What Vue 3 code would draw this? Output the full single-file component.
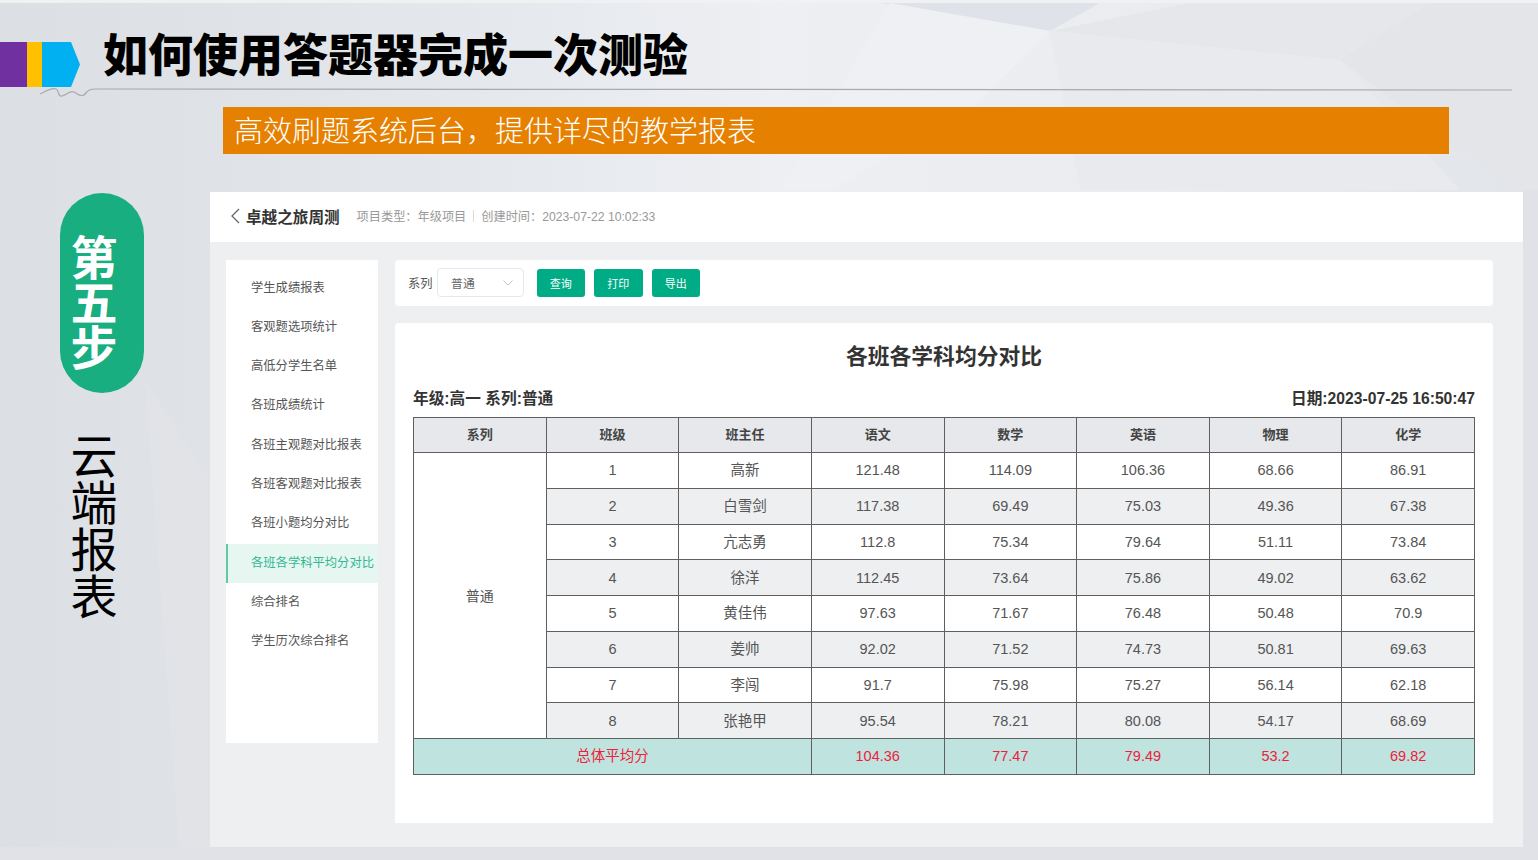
<template>
  <div class="slide">
    <svg class="bg" viewBox="0 0 1538 860" preserveAspectRatio="none" aria-hidden="true">
      <defs>
        <linearGradient id="base" x1="0" y1="0" x2="1" y2="0">
          <stop offset="0" stop-color="#dcdfe3" />
          <stop offset="0.14" stop-color="#dfe2e6" />
          <stop offset="0.32" stop-color="#e5e8ec" />
          <stop offset="0.5" stop-color="#edeff3" />
          <stop offset="0.68" stop-color="#ebedf1" />
          <stop offset="0.85" stop-color="#e8eaee" />
          <stop offset="1" stop-color="#e1e4e8" />
        </linearGradient>
      </defs>
      <rect width="1538" height="860" fill="url(#base)" />
      <polygon points="0,0 1538,0 1538,3 0,3" fill="#f0f1f3" />
      <polygon points="880,3 1100,3 1050,31" fill="#dfe2e8" />
      <polygon points="1050,31 1190,3 1430,3 1340,60" fill="#e5e7eb" />
      <polygon points="890,3 1050,31 970,110 830,190 780,190" fill="#eff0f4" />
      <polygon points="1050,31 1340,60 1460,190 1080,190" fill="#e8eaee" />
      <polygon points="1430,3 1538,3 1538,190 1510,190 1340,60" fill="#e3e5e9" />
      <polygon points="145,380 210,480 210,860 180,860" fill="#e1e3e7" />
      <polygon points="0,847 1538,847 1538,860 0,860" fill="#e0e2e7" />
      <polygon points="1523,190 1538,190 1538,860 1523,860" fill="#e0e2e7" />
    </svg>

    <header class="head">
      <div class="logo">
        <span class="logo-purple"></span>
        <span class="logo-yellow"></span>
        <span class="logo-blue"></span>
      </div>
      <h1>如何使用答题器完成一次测验</h1>
      <svg class="rule" viewBox="0 0 1538 30" aria-hidden="true">
        <path d="M40 13 C46 10 52 6 56 8 C60 10 57 16 62 15 C67 14 70 9 74 11 C78 13 80 16 84 14 C88 10 88 8 96 8 L1512 9" fill="none" stroke="#a9aaae" stroke-width="1.2" />
      </svg>
    </header>

    <div class="banner">高效刷题系统后台，提供详尽的教学报表</div>

    <div class="body">
      <aside class="step">
        <div class="pill">第五步</div>
        <div class="step-name">云端报表</div>
      </aside>

      <main class="panel">
        <div class="topbar">
          <svg class="back" viewBox="0 0 10 16" aria-hidden="true">
            <path d="M9 1 L2 8 L9 15" fill="none" stroke="#666" stroke-width="1.3" />
          </svg>
          <span class="project">卓越之旅周测</span>
          <span class="meta">项目类型：年级项目</span>
          <span class="sep"></span>
          <span class="meta">创建时间：2023-07-22 10:02:33</span>
        </div>

        <div class="content">
          <nav class="menu">
            <a
              v-for="item in menu"
              :key="item"
              class="menu-item"
              :class="{ active: item === activeItem }"
            >{{ item }}</a>
          </nav>

          <div class="right">
            <div class="filter">
              <span class="filter-label">系列</span>
              <div class="select">
                <span>普通</span>
                <svg viewBox="0 0 10 6" aria-hidden="true">
                  <path d="M0.5 0.5 L5 5 L9.5 0.5" fill="none" stroke="#c0c4cc" stroke-width="1" />
                </svg>
              </div>
              <button class="btn">查询</button>
              <button class="btn">打印</button>
              <button class="btn">导出</button>
            </div>

            <section class="report">
              <h2>各班各学科均分对比</h2>
              <div class="report-info">
                <span>年级:高一 系列:普通</span>
                <span>日期:2023-07-25 16:50:47</span>
              </div>
              <table>
                <thead>
                  <tr>
                    <th v-for="col in columns" :key="col">{{ col }}</th>
                  </tr>
                </thead>
                <tbody>
                  <tr v-for="(row, i) in rows" :key="row[0]" :class="{ even: i % 2 === 1 }">
                    <td v-if="i === 0" :rowspan="rows.length" class="series">普通</td>
                    <td v-for="(cell, j) in row" :key="j">{{ cell }}</td>
                  </tr>
                  <tr class="total">
                    <td colspan="3">总体平均分</td>
                    <td v-for="val in totals" :key="val">{{ val }}</td>
                  </tr>
                </tbody>
              </table>
            </section>
          </div>
        </div>
      </main>
    </div>
  </div>
</template>

<script setup>
const activeItem = '各班各学科平均分对比'

const menu = [
  '学生成绩报表',
  '客观题选项统计',
  '高低分学生名单',
  '各班成绩统计',
  '各班主观题对比报表',
  '各班客观题对比报表',
  '各班小题均分对比',
  '各班各学科平均分对比',
  '综合排名',
  '学生历次综合排名'
]

const columns = ['系列', '班级', '班主任', '语文', '数学', '英语', '物理', '化学']

const rows = [
  [1, '高新', '121.48', '114.09', '106.36', '68.66', '86.91'],
  [2, '白雪剑', '117.38', '69.49', '75.03', '49.36', '67.38'],
  [3, '亢志勇', '112.8', '75.34', '79.64', '51.11', '73.84'],
  [4, '徐洋', '112.45', '73.64', '75.86', '49.02', '63.62'],
  [5, '黄佳伟', '97.63', '71.67', '76.48', '50.48', '70.9'],
  [6, '姜帅', '92.02', '71.52', '74.73', '50.81', '69.63'],
  [7, '李闯', '91.7', '75.98', '75.27', '56.14', '62.18'],
  [8, '张艳甲', '95.54', '78.21', '80.08', '54.17', '68.69']
]

const totals = ['104.36', '77.47', '79.49', '53.2', '69.82']
</script>

<style>
html,
body {
  margin: 0;
  background: #e2e4ea;
}
</style>

<style scoped>
.slide {
  position: relative;
  width: 1538px;
  height: 860px;
  overflow: hidden;
  font-family: "Liberation Sans", "Noto Sans CJK SC", sans-serif;
  color: #333;
}

.bg {
  position: absolute;
  inset: 0;
  width: 100%;
  height: 100%;
}

.head {
  position: relative;
  display: flex;
  align-items: flex-start;
  height: 107px;
}

.logo {
  display: flex;
  width: 80px;
  height: 45px;
  margin-top: 42px;
}

.logo-purple {
  width: 27px;
  background: #7030a0;
}

.logo-yellow {
  width: 15px;
  background: #ffc000;
}

.logo-blue {
  flex: 1;
  background: #00b0f0;
  clip-path: polygon(0 0, 29px 0, 38px 50%, 29px 100%, 0 100%);
}

h1 {
  margin: 28px 0 0 23px;
  font-size: 45px;
  line-height: 58px;
  font-weight: 900;
  color: #000;
  white-space: nowrap;
}

.rule {
  position: absolute;
  left: 0;
  top: 81px;
  width: 1538px;
  height: 30px;
}

.banner {
  position: relative;
  box-sizing: border-box;
  width: 1226px;
  height: 47px;
  margin-left: 223px;
  padding: 5px 0 0 11px;
  background: #e68000;
  color: #fff;
  font-size: 29px;
  line-height: 41px;
  font-weight: 300;
  white-space: nowrap;
}

.body {
  position: relative;
  display: flex;
  margin-top: 38px;
}

.step {
  width: 210px;
  padding: 1px 0 0 60px;
  box-sizing: border-box;
}

.pill {
  box-sizing: border-box;
  display: flex;
  align-items: center;
  width: 84px;
  height: 200px;
  padding: 41px 24px 0 0;
  border-radius: 42px;
  background: #19ae7f;
  color: #fff;
  font-size: 47px;
  line-height: 47px;
  font-weight: 700;
  letter-spacing: -2px;
  writing-mode: vertical-rl;
  text-orientation: upright;
}

.step-name {
  box-sizing: border-box;
  display: flex;
  align-items: center;
  width: 84px;
  margin-top: 39px;
  padding-right: 24px;
  color: #000;
  font-size: 47px;
  line-height: 47px;
  writing-mode: vertical-rl;
  text-orientation: upright;
}

.panel {
  width: 1313px;
  height: 655px;
  background: #eeeff1;
}

.topbar {
  box-sizing: border-box;
  display: flex;
  align-items: center;
  height: 50px;
  padding: 0 0 2px 20px;
  background: #fff;
}

.back {
  width: 10px;
  height: 16px;
  margin-right: 6px;
}

.project {
  margin-right: 17px;
  font-size: 15.6px;
  font-weight: 700;
  color: #333;
}

.meta {
  font-size: 12.2px;
  color: #999;
}

.sep {
  width: 1px;
  height: 12px;
  margin: 0 7px;
  background: #ddd;
}

.content {
  display: flex;
  align-items: flex-start;
  padding: 18px 31px 0 16px;
}

.menu {
  box-sizing: border-box;
  display: flex;
  flex-direction: column;
  width: 152px;
  height: 483px;
  padding-top: 8.5px;
  background: #fff;
  flex-shrink: 0;
}

.menu-item {
  height: 39.3px;
  padding-left: 25px;
  font-size: 12.3px;
  line-height: 39.3px;
  color: #555;
  white-space: nowrap;
}

.menu-item.active {
  background: #e6f6f1;
  color: #32b893;
  box-shadow: inset 2px 0 0 #5fc9a8;
}

.right {
  flex: 1;
  margin-left: 17px;
}

.filter {
  box-sizing: border-box;
  display: flex;
  align-items: center;
  height: 46px;
  padding: 0 0 1px 13px;
  background: #fff;
  border-radius: 4px;
}

.filter-label {
  margin-right: 4px;
  font-size: 12.3px;
  color: #555;
}

.select {
  box-sizing: border-box;
  display: flex;
  align-items: center;
  justify-content: space-between;
  width: 87px;
  height: 29px;
  margin-right: 13px;
  padding: 0 10px 0 13.5px;
  border: 1px solid #e6e8ee;
  border-radius: 4px;
  font-size: 11.8px;
  color: #666;
}

.select svg {
  width: 10px;
  height: 6px;
}

.btn {
  width: 48.5px;
  height: 28px;
  margin-right: 9px;
  padding: 0;
  border: none;
  border-radius: 3px;
  background: #00ac85;
  color: #fff;
  font-family: inherit;
  font-size: 11px;
}

.report {
  box-sizing: border-box;
  height: 500px;
  margin-top: 17px;
  padding: 18px 18px 0;
  background: #fff;
  border-radius: 4px 4px 0 0;
}

h2 {
  margin: 0;
  font-size: 21.8px;
  line-height: 32px;
  text-align: center;
  font-weight: 700;
  color: #333;
}

.report-info {
  display: flex;
  justify-content: space-between;
  margin-top: 14px;
  font-size: 15.7px;
  line-height: 24px;
  font-weight: 700;
  color: #333;
}

table {
  width: 1062px;
  margin-top: 6px;
  border-collapse: collapse;
  table-layout: fixed;
  font-size: 14.5px;
  line-height: 16px;
  color: #555;
}

thead tr {
  height: 35px;
}

tbody tr {
  height: 35.75px;
}

th,
td {
  padding: 0;
  border: 1px solid #5f5f5f;
  text-align: center;
  font-weight: 400;
}

th {
  background: #e6e8eb;
  font-size: 13px;
  font-weight: 700;
  color: #444;
}

.even td {
  background: #eeeff1;
}

.even td.series,
td.series {
  background: #fff;
  font-size: 14px;
}

.total td {
  background: #bfe3df;
  color: #f0203a;
}
</style>
